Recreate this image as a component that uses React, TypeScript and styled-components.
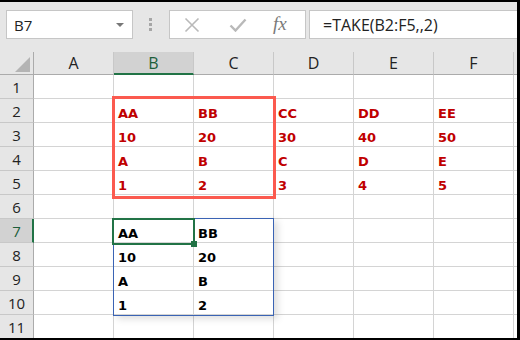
import styled, { createGlobalStyle } from 'styled-components';

const GlobalStyle = createGlobalStyle`
  * {
    box-sizing: border-box;
  }

  body {
    margin: 0;
    background: #ffffff;
  }
`;

// G is only a sliver at the right edge, so its header shows no letter
const COLUMNS = ['A', 'B', 'C', 'D', 'E', 'F', ''];
const SELECTED_COLUMN = 'B';
const SELECTED_ROW = 7;

type CellValue = { text: string; tone: 'red' | 'black' };

const sourceRows = [
  ['AA', 'BB', 'CC', 'DD', 'EE'],
  ['10', '20', '30', '40', '50'],
  ['A', 'B', 'C', 'D', 'E'],
  ['1', '2', '3', '4', '5'],
];

const cellAt = (row: number, colIndex: number): CellValue | null => {
  if (row >= 2 && row <= 5 && colIndex >= 1 && colIndex <= 5) {
    return { text: sourceRows[row - 2][colIndex - 1], tone: 'red' };
  }
  if (row >= 7 && row <= 10 && colIndex >= 1 && colIndex <= 2) {
    return { text: sourceRows[row - 7][colIndex - 1], tone: 'black' };
  }
  return null;
};

const Window = styled.div`
  width: 520px;
  height: 340px;
  background: #e6e6e6;
  border-top: 2px solid #000;
  border-right: 3px solid #000;
  border-bottom: 2px solid #000;
  overflow: hidden;
  display: flex;
  flex-direction: column;
`;

const Toolbar = styled.div`
  height: 50px;
  flex-shrink: 0;
  display: flex;
  align-items: flex-start;
  padding: 8px 0 0 6px;
`;

const NameBox = styled.div`
  width: 127px;
  height: 29px;
  background: #fff;
  border: 1px solid #c6c6c6;
  display: flex;
  align-items: center;
  justify-content: space-between;
  padding: 0 8px 0 7px;
  font-family: 'Open Sans', 'Noto Sans', sans-serif;
  font-size: 15px;
  color: #222;
`;

const DropArrow = styled.span`
  width: 0;
  height: 0;
  border-left: 4px solid transparent;
  border-right: 4px solid transparent;
  border-top: 4px solid #777;
`;

const Grip = styled.div`
  display: flex;
  flex-direction: column;
  gap: 2px;
  margin: 8px 17px 0 16px;
`;

const GripDot = styled.span`
  width: 3px;
  height: 3px;
  background: #a6a6a6;
`;

const IconBox = styled.div`
  width: 137px;
  height: 29px;
  background: #fff;
  border: 1px solid #c6c6c6;
  display: flex;
  align-items: center;
  padding-left: 14px;
  margin-right: 3px;
`;

const IconSlot = styled.span<{ $width: number }>`
  width: ${(p) => p.$width}px;
  display: flex;
  align-items: center;
`;

const FxLabel = styled.span`
  font-family: 'Liberation Serif', 'DejaVu Serif', serif;
  font-style: italic;
  font-size: 19px;
  color: #7a7a7a;
  line-height: 1;
  margin-top: -2px;
`;

const FormulaInput = styled.div`
  flex: 1;
  height: 29px;
  background: #fff;
  border: 1px solid #c6c6c6;
  border-right: none;
  display: flex;
  align-items: center;
  padding-left: 13px;
  font-family: 'Open Sans', 'Noto Sans', sans-serif;
  font-size: 16px;
  color: #222;
`;

const SheetArea = styled.div`
  position: relative;
  flex: 1;
  overflow: hidden;
`;

const Grid = styled.div`
  display: grid;
  grid-template-columns: 34px repeat(7, 80px);
  grid-template-rows: 23px repeat(11, 24px);
`;

const Corner = styled.div`
  background: #e6e6e6;
  border-right: 1px solid #ababab;
  border-bottom: 1px solid #ababab;
  position: relative;
`;

const CornerTriangle = styled.span`
  position: absolute;
  right: 3px;
  bottom: 2px;
  width: 0;
  height: 0;
  border-left: 15px solid transparent;
  border-bottom: 15px solid #b4b4b4;
`;

const ColumnHeader = styled.div<{ $selected: boolean }>`
  background: ${(p) => (p.$selected ? '#d2d2d2' : '#e6e6e6')};
  border-right: 1px solid #c8c8c8;
  border-bottom: ${(p) => (p.$selected ? '2px solid #217346' : '1px solid #ababab')};
  display: flex;
  align-items: center;
  justify-content: center;
  padding-top: ${(p) => (p.$selected ? 1 : 0)}px;
  font-family: 'Open Sans', 'Noto Sans', sans-serif;
  font-size: 16px;
  color: ${(p) => (p.$selected ? '#1d5e3a' : '#222')};
`;

const RowHeader = styled.div<{ $selected: boolean }>`
  background: ${(p) => (p.$selected ? '#d2d2d2' : '#e6e6e6')};
  border-right: ${(p) => (p.$selected ? '2px solid #217346' : '1px solid #ababab')};
  border-bottom: 1px solid #c8c8c8;
  display: flex;
  align-items: center;
  justify-content: center;
  padding-left: ${(p) => (p.$selected ? 1 : 0)}px;
  font-family: 'Open Sans', 'Noto Sans', sans-serif;
  font-size: 15px;
  color: ${(p) => (p.$selected ? '#1d5e3a' : '#222')};
`;

const Cell = styled.div<{ $tone?: 'red' | 'black' }>`
  background: #fff;
  border-right: 1px solid #d4d4d4;
  border-bottom: 1px solid #d4d4d4;
  display: flex;
  align-items: flex-end;
  padding: 0 0 0 4px;
  font-family: 'DejaVu Sans', Verdana, sans-serif;
  font-weight: bold;
  font-size: 13px;
  line-height: 16px;
  color: ${(p) => (p.$tone === 'red' ? '#c00000' : '#000')};
`;

const SourceOutline = styled.div`
  position: absolute;
  left: 112px;
  top: 44px;
  width: 164px;
  height: 103px;
  border: 3px solid #fb5a4f;
  pointer-events: none;
`;

const SpillOutline = styled.div`
  position: absolute;
  left: 113px;
  top: 166px;
  width: 161px;
  height: 98px;
  border: 1px solid #3a63b4;
  box-shadow: 4px 3px 7px rgba(0, 0, 0, 0.13);
  pointer-events: none;
`;

const ActiveCell = styled.div`
  position: absolute;
  left: 112px;
  top: 166px;
  width: 83px;
  height: 27px;
  border: 2px solid #217346;
  pointer-events: none;
`;

const FillHandle = styled.span`
  position: absolute;
  right: -4px;
  bottom: -4px;
  width: 6px;
  height: 6px;
  background: #217346;
`;

const CancelIcon = () => (
  <svg width='16' height='16' viewBox='0 0 16 16'>
    <path d='M1.5 1.5 L14.5 14.5 M14.5 1.5 L1.5 14.5' stroke='#b9b9b9' strokeWidth='1.6' fill='none' />
  </svg>
);

const EnterIcon = () => (
  <svg width='18' height='14' viewBox='0 0 18 14'>
    <path d='M1.5 7.5 L6.5 12.5 L16.5 1.5' stroke='#b9b9b9' strokeWidth='2.4' fill='none' />
  </svg>
);

const App = () => {
  const rows = Array.from({ length: 11 }, (_, i) => i + 1);

  return (
    <Window>
      <GlobalStyle />
      <Toolbar>
        <NameBox>
          B7
          <DropArrow />
        </NameBox>
        <Grip>
          <GripDot />
          <GripDot />
          <GripDot />
        </Grip>
        <IconBox>
          <IconSlot $width={45}>
            <CancelIcon />
          </IconSlot>
          <IconSlot $width={44}>
            <EnterIcon />
          </IconSlot>
          <IconSlot $width={20}>
            <FxLabel>fx</FxLabel>
          </IconSlot>
        </IconBox>
        <FormulaInput>=TAKE(B2:F5,,2)</FormulaInput>
      </Toolbar>
      <SheetArea>
        <Grid>
          <Corner>
            <CornerTriangle />
          </Corner>
          {COLUMNS.map((col, i) => (
            <ColumnHeader key={`c${i}`} $selected={col === SELECTED_COLUMN}>
              {col}
            </ColumnHeader>
          ))}
          {rows.map((row) => [
            <RowHeader key={`h${row}`} $selected={row === SELECTED_ROW}>
              {row}
            </RowHeader>,
            ...COLUMNS.map((_, colIndex) => {
              const value = cellAt(row, colIndex);
              return (
                <Cell key={`${row}-${colIndex}`} $tone={value?.tone}>
                  {value?.text}
                </Cell>
              );
            }),
          ])}
        </Grid>
        <SourceOutline />
        <SpillOutline />
        <ActiveCell>
          <FillHandle />
        </ActiveCell>
      </SheetArea>
    </Window>
  );
};

export default App;
